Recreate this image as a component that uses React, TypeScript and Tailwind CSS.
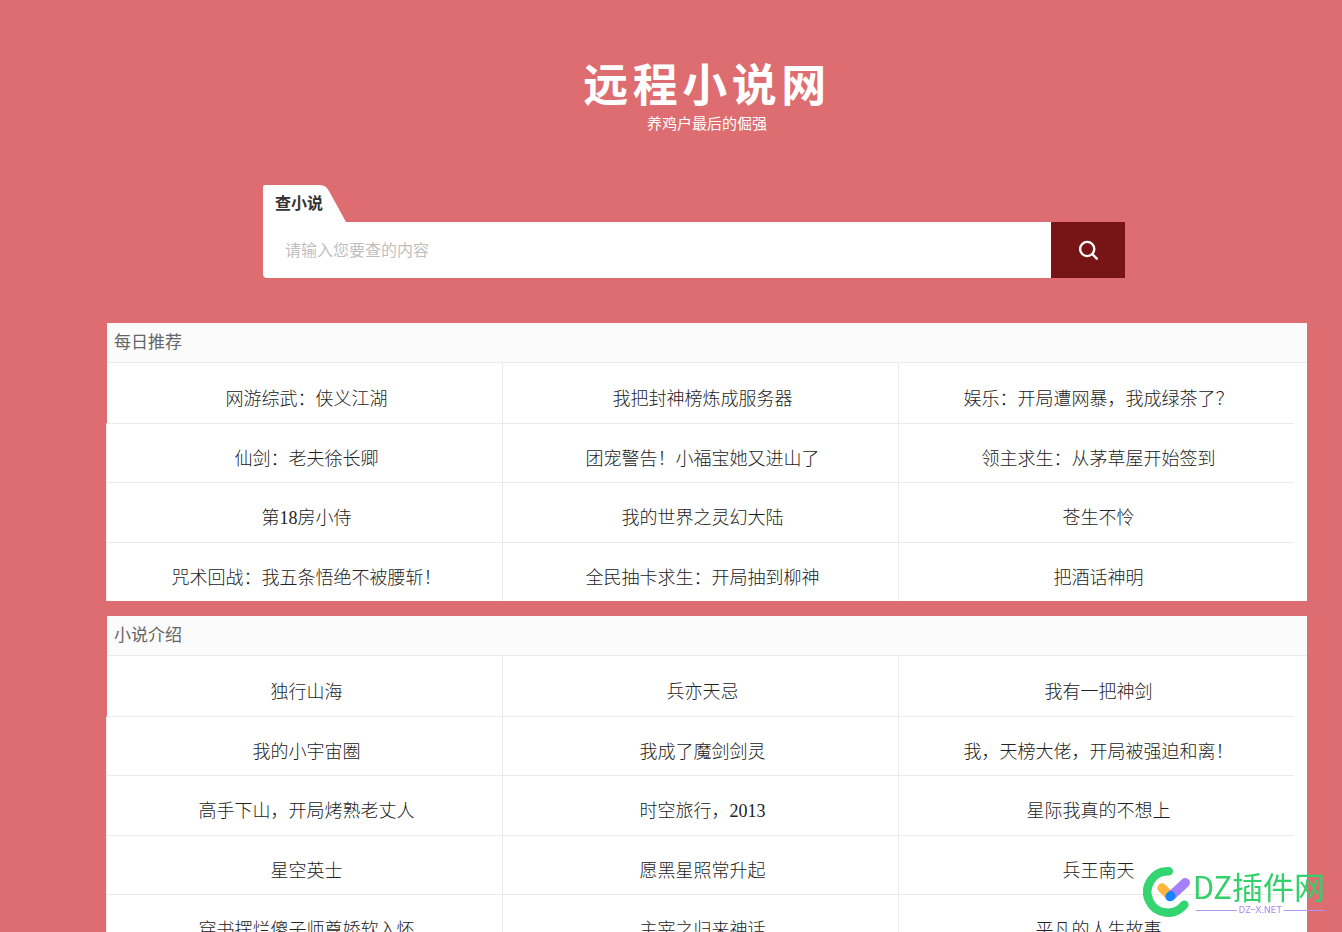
import React from "react";

const dailyPicks = [
  "网游综武：侠义江湖",
  "我把封神榜炼成服务器",
  "娱乐：开局遭网暴，我成绿茶了？",
  "仙剑：老夫徐长卿",
  "团宠警告！小福宝她又进山了",
  "领主求生：从茅草屋开始签到",
  "第18房小侍",
  "我的世界之灵幻大陆",
  "苍生不怜",
  "咒术回战：我五条悟绝不被腰斩！",
  "全民抽卡求生：开局抽到柳神",
  "把酒话神明",
];

const introductions = [
  "独行山海",
  "兵亦天忌",
  "我有一把神剑",
  "我的小宇宙圈",
  "我成了魔剑剑灵",
  "我，天榜大佬，开局被强迫和离！",
  "高手下山，开局烤熟老丈人",
  "时空旅行，2013",
  "星际我真的不想上",
  "星空英士",
  "愿黑星照常升起",
  "兵王南天",
  "穿书摆烂傻子师尊娇软入怀",
  "主宰之归来神话",
  "平凡的人生故事",
];

// Row heights from the top; later rows use the default below.
const rowHeights = ["h-[61px]", "h-[59px]", "h-[60px]"];

interface NovelPanelProps {
  title: string;
  novels: string[];
}

const NovelPanel: React.FC<NovelPanelProps> = ({ title, novels }) => {
  const rowClass = (i: number) => {
    if (i >= novels.length - 3) return "h-[58px]";
    return `border-b border-b-[#ebebeb] ${rowHeights[Math.floor(i / 3)] ?? "h-[59px]"}`;
  };

  return (
    <section className="bg-white">
      <h2 className="h-10 border-b border-[#ebebeb] bg-[#fbfbfb] px-[7px] text-[17px] leading-9 text-[#666]">
        {title}
      </h2>
      <ul className="-ml-px grid w-[99%] grid-cols-3">
        {novels.map((novel, i) => (
          <li
            key={novel}
            className={`flex items-center justify-center border-l pt-[11px] pl-1 ${rowClass(i)} ${
              i === 0 ? "border-l-transparent" : "border-l-[#ebebeb]"
            }`}
          >
            <a
              href="#"
              className="font-['Liberation_Serif','Noto_Sans_CJK_SC',serif] text-lg font-light whitespace-nowrap text-[#222]"
            >
              {novel}
            </a>
          </li>
        ))}
      </ul>
    </section>
  );
};

const SearchBox = () => {
  return (
    <form
      className="mr-[182px] ml-[156px]"
      onSubmit={(e) => e.preventDefault()}
    >
      <div className="relative h-[37px] w-[83px]">
        <svg
          className="absolute inset-0 h-full w-full"
          viewBox="0 0 83 37"
          aria-hidden="true"
        >
          <path d="M0 37V2Q0 0 2 0H57Q63 0 66 6L83 37Z" fill="#fff" />
        </svg>
        <label
          htmlFor="keyword"
          className="relative block pl-3 text-base leading-[34px] font-bold text-[#333]"
        >
          查小说
        </label>
      </div>
      <div className="flex h-14">
        <input
          id="keyword"
          type="text"
          placeholder="请输入您要查的内容"
          className="min-w-0 flex-1 rounded-bl-sm bg-white px-[22px] pb-[3px] text-base text-[#333] outline-none placeholder:text-[#bfbfbf]"
        />
        <button
          type="submit"
          aria-label="搜索"
          className="flex w-[74px] items-center justify-center bg-[#771416]"
        >
          <svg
            className="h-6 w-6"
            viewBox="0 0 24 24"
            fill="none"
            stroke="#fff"
            strokeWidth="2.4"
            aria-hidden="true"
          >
            <circle cx="11.2" cy="11" r="7.1" />
            <path d="M16.2 16l4.6 4.6" strokeLinecap="round" />
          </svg>
        </button>
      </div>
    </form>
  );
};

const Watermark = () => {
  return (
    <div className="pointer-events-none fixed right-[17px] bottom-[15px] flex items-center">
      <svg width="50" height="50" viewBox="0 0 50 50" fill="none" aria-hidden="true">
        <path
          d="M25.7 4.3A20.7 20.7 0 1 0 41.3 37.7"
          stroke="#33d570"
          strokeWidth="8.6"
          strokeLinecap="round"
        />
        <g strokeWidth="9.4" strokeLinecap="round">
          <path d="M19 21L27 29" stroke="#ffb73f" />
          <path d="M42.3 15.7L28 29" stroke="#a57fff" />
          <path d="M27 29.6L27.8 28.8" stroke="#1684fc" />
        </g>
      </svg>
      <div>
        <div className="text-[31px] leading-9 whitespace-nowrap text-[#33d06c]">
          DZ插件网
        </div>
        <div className="flex items-center gap-0.5 pl-[3px] font-[Inter,sans-serif] text-[9px] leading-3 text-[#a882f0]">
          <span className="h-px flex-1 bg-[#b394f2]" />
          <span>DZ–X.NET</span>
          <span className="h-px flex-1 bg-[#b394f2]" />
        </div>
      </div>
    </div>
  );
};

export default function App() {
  return (
    <div
      lang="zh-CN"
      className="min-h-screen bg-[#dd6d70] pr-[35px] pl-[107px] font-['Noto_Sans_CJK_SC',sans-serif]"
    >
      <header className="pt-[57px] pb-[50px] text-center text-white">
        <h1 className="text-[45px] leading-[52px] font-bold tracking-widest">
          远程小说网
        </h1>
        <p className="mt-0.5 text-[15px] leading-6">养鸡户最后的倔强</p>
      </header>
      <SearchBox />
      <main className="flex flex-col gap-[15px] pt-[45px]">
        <NovelPanel title="每日推荐" novels={dailyPicks} />
        <NovelPanel title="小说介绍" novels={introductions} />
      </main>
      <Watermark />
    </div>
  );
}
